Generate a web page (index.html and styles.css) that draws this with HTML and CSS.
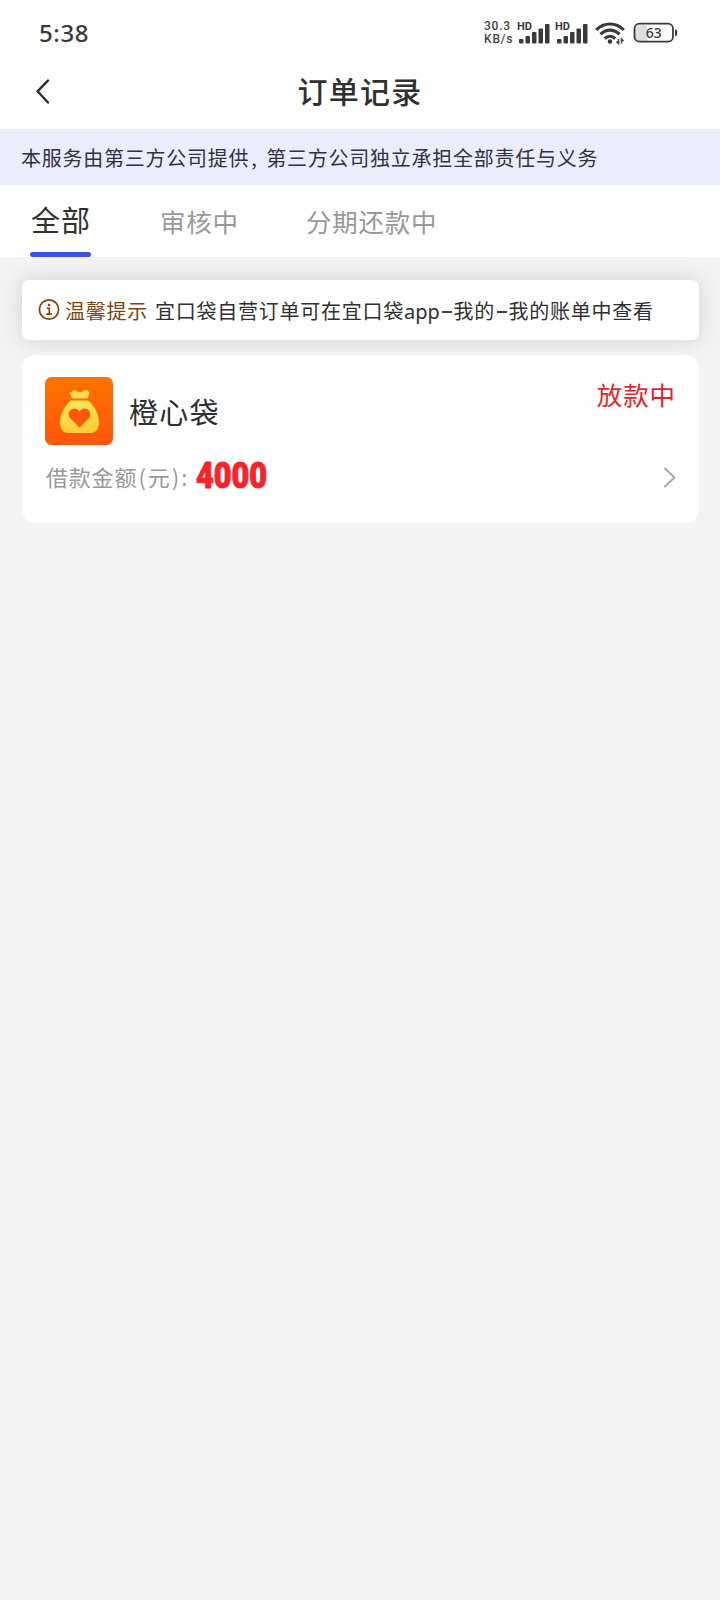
FILE: index.html
```html
<!DOCTYPE html>
<html lang="zh-CN">
<head>
<meta charset="utf-8">
<meta name="viewport" content="width=device-width, initial-scale=1">
<title>订单记录</title>
<link rel="stylesheet" href="styles.css">
</head>
<body>
<div class="status">
  <span class="clock">5:38</span>
  <div class="status-right">
    <div class="speed"><span>30.3</span><span>KB/s</span></div>
    <svg class="signals" width="72" height="28" viewBox="0 -2 72 28">
      <g fill="#3a3a3a">
        <text class="hd" x="0" y="9" textLength="15" lengthAdjust="spacingAndGlyphs">HD</text>
        <rect x="2" y="18" width="4.500" height="4.500" rx="1"/><rect x="8.500" y="15" width="4.500" height="7.500" rx="1"/><rect x="15" y="11" width="4.500" height="11.500" rx="1"/><rect x="21.500" y="7.500" width="4.500" height="15" rx="1"/><rect x="28" y="3" width="4.500" height="19.500" rx="1"/>
        <text class="hd" x="38" y="9" textLength="15" lengthAdjust="spacingAndGlyphs">HD</text>
        <rect x="40" y="18" width="4.500" height="4.500" rx="1"/><rect x="46.500" y="15" width="4.500" height="7.500" rx="1"/><rect x="53" y="11" width="4.500" height="11.500" rx="1"/><rect x="59.500" y="7.500" width="4.500" height="15" rx="1"/><rect x="66" y="3" width="4.500" height="19.500" rx="1"/>
      </g>
    </svg>
    <svg class="wifi" width="30" height="24" viewBox="0 0 30 24">
      <g fill="none" stroke="#3a3a3a" stroke-width="3.200">
        <path d="M1.200 9C9 1 21 1 28.800 9"/><path d="M5.500 13.300C11 7.700 19 7.700 24.500 13.300"/><path d="M9.700 17.600C12.800 14.600 17.200 14.600 20.300 17.600"/>
      </g>
      <circle cx="15" cy="20.500" r="2.300" fill="#3a3a3a"/>
      <path d="M23.500 18v4.500l-2-2M26.500 22.500V18l2 2" fill="none" stroke="#3a3a3a" stroke-width="1.500"/>
    </svg>
    <svg class="battery" width="45" height="22" viewBox="0 0 45 22">
      <path d="M5 3h9v16H5a3 3 0 0 1-3-3V6a3 3 0 0 1 3-3z" fill="#dedede"/>
      <rect x="1.500" y="1.700" width="38.500" height="18" rx="5" fill="none" stroke="#3a3a3a" stroke-width="1.800"/>
      <path d="M42 7.500c2.200 0 2.200 1 2.200 3.200s0 3.200-2.200 3.200z" fill="#3a3a3a"/>
      <text class="charge" x="20.800" y="15.700" text-anchor="middle">63</text>
    </svg>
  </div>
</div>
<header class="nav">
  <svg class="back" width="16" height="26" viewBox="0 0 16 26"><path d="M13 2.500L2.500 13.300L13 24.500" fill="none" stroke="#2b2b2b" stroke-width="2.400" stroke-linecap="round" stroke-linejoin="round"/></svg>
  <h1 class="title">订单记录</h1>
</header>
<div class="notice">本服务由第三方公司提供<span class="comma">,</span>第三方公司独立承担全部责任与义务</div>
<nav class="tabs">
  <div class="tab active">全部</div>
  <div class="tab">审核中</div>
  <div class="tab">分期还款中</div>
</nav>
<main class="content">
  <div class="tip">
    <svg class="info" width="22" height="22" viewBox="0 0 22 22"><g fill="none" stroke="#80430f"><circle cx="11" cy="10.500" r="9.600" stroke-width="1.700"/><path d="M8.700 9.300h2.600v5.500M8.300 15.100h5.800" stroke-width="1.600"/></g><circle cx="11" cy="6" r="1.300" fill="#80430f"/></svg>
    <span class="tip-label">温馨提示</span>
    <span class="tip-text">宜口袋自营订单可在宜口袋<span class="latin">app</span><i class="dash"></i>我的<i class="dash"></i>我的账单中查看</span>
  </div>
  <section class="order">
    <div class="order-head">
      <svg class="logo" width="68" height="68" viewBox="0 0 68 68">
        <defs>
          <linearGradient id="orange" x1="0" y1="0" x2="0" y2="1"><stop offset="0" stop-color="#ff7300"/><stop offset="1" stop-color="#ff560c"/></linearGradient>
          <linearGradient id="gold" x1="0" y1="0" x2="0.300" y2="1"><stop offset="0" stop-color="#ffea5c"/><stop offset="1" stop-color="#ffce34"/></linearGradient>
        </defs>
        <rect width="68" height="68" rx="6.500" fill="url(#orange)"/>
        <path d="M27 21.500L24.200 15.500C26.500 15.700 27.200 13.200 29.500 13.200C32 13.200 33 15.500 35 15.300C37 15.100 38 12.700 41 12.900C44 13.100 45 16 43.800 18.500L42.500 21.500Z" fill="#ffd750"/>
        <path d="M26 23.500H43C49 28 54 37 54 45C54 52 51 56 45.500 56H23.500C18 56 15 52 15 45.500C15 37 20 28 26 23.500Z" fill="url(#gold)"/>
        <path d="M34.500 50.500L25.500 41.500C22.500 38.500 23.300 32.500 28.500 31.700C31.500 31.200 33.500 33 34.500 34.500C35.500 33 37.500 31.200 40.500 31.700C45.700 32.500 46.500 38.500 43.500 41.500Z" fill="#ff570c"/>
      </svg>
      <span class="name">橙心袋</span>
      <span class="state">放款中</span>
    </div>
    <div class="order-row">
      <span class="label">借款金额<span class="paren">(</span>元<span class="paren">)</span>:</span>
      <span class="amount">4000</span>
      <svg class="go" width="14" height="22" viewBox="0 0 14 22"><path d="M3 2.500L12.500 11.500L3 20.500" fill="none" stroke="#a6a6a6" stroke-width="2" stroke-linecap="round" stroke-linejoin="round"/></svg>
    </div>
  </section>
</main>
</body>
</html>
```

FILE: styles.css
```css
* { box-sizing: border-box; }
body {
  margin: 0;
  width: 720px;
  min-height: 1600px;
  background: #f3f3f3;
  color: #303030;
  font-family: "Noto Sans CJK SC", "Noto Sans", sans-serif;
  white-space: nowrap;
}
svg { display: block; flex: none; }
.status {
  display: flex;
  justify-content: space-between;
  align-items: center;
  height: 66px;
  padding: 0 42px 0 39px;
  background: #fff;
}
.clock { font: 500 24px/30px "Noto Sans", sans-serif; letter-spacing: 0.6px; color: #3a3a3a; }
.status-right { display: flex; align-items: center; }
.speed {
  display: flex;
  flex-direction: column;
  width: 33px;
  font: 500 12px/13px Roboto, sans-serif;
  letter-spacing: 0.8px;
  color: #444;
}
.hd { font: 700 10px Roboto, sans-serif; }
.wifi { margin-left: 6px; }
.battery { margin-left: 8px; }
.charge { font: 500 14px "Noto Sans", sans-serif; fill: #3a3a3a; }
.nav {
  display: grid;
  grid-template-columns: 1fr auto 1fr;
  align-items: center;
  height: 63px;
  padding: 0 35px 14px;
  background: #fff;
}
.title { margin: 0; padding-bottom: 2px; font-size: 30px; font-weight: 500; line-height: 44px; letter-spacing: 1.3px; }
.notice {
  height: 56px;
  padding-left: 21px;
  background: #ebedfc;
  color: #303240;
  font-size: 20px;
  line-height: 58px;
  letter-spacing: 0.75px;
}
.comma { display: inline-block; width: 17px; padding-left: 2px; }
.tabs {
  display: flex;
  height: 72px;
  padding-left: 30px;
  background: #fff;
}
.tab {
  margin-right: 67px;
  padding: 3px 0 0 2px;
  color: #999;
  font-size: 25.5px;
  line-height: 66px;
  letter-spacing: 0.8px;
}
.tab.active {
  display: flex;
  flex-direction: column;
  width: 61px;
  padding: 2px 0 0;
  color: #303030;
  font-size: 29px;
  line-height: 65px;
  letter-spacing: 1px;
  text-indent: 1px;
}
.tab + .tab + .tab { margin-left: -2px; }
.tab.active::after { content: ""; flex: none; height: 5px; border-radius: 3px; background: #3952e8; }
.content { display: flex; flex-direction: column; gap: 15px; padding: 23px 21px 0 22px; }
.tip {
  display: flex;
  align-items: center;
  height: 60px;
  padding-left: 16px;
  border-radius: 7px;
  background: #fff;
  box-shadow: 0 0 22px rgba(0, 0, 0, 0.14);
  font-size: 20px;
  line-height: 60px;
  letter-spacing: 0.75px;
}
.tip-label { margin-left: 5px; padding-top: 1px; color: #80430f; }
.tip-text { margin-left: 7px; padding-top: 2px; }
.latin { display: inline-block; width: 36px; font-family: "Noto Sans", sans-serif; line-height: 1; letter-spacing: 0; }
.dash { display: inline-block; width: 10px; height: 2px; margin: 0 1.500px 6px 2px; background: #444; }
.order {
  height: 168px;
  padding: 22px 23px 0 23px;
  border-radius: 13px;
  background: #fff;
}
.order-head { display: flex; align-items: center; height: 68px; }
.name { margin-left: 16px; font-size: 29px; line-height: 68px; letter-spacing: 1.2px; }
.state {
  align-self: flex-start;
  margin-left: auto;
  color: #e91f29;
  font-size: 25.5px;
  line-height: 34px;
  letter-spacing: 0.9px;
}
.order-row { display: flex; align-items: center; height: 60px; padding-top: 3px; }
.label { width: 151px; padding: 0 0 2px 1px; color: #999; font-size: 22px; line-height: 58px; letter-spacing: 0.8px; }
.paren { padding: 0 1.200px; }
.amount {
  color: #f8222b;
  font: 900 36.500px/52px Roboto, sans-serif;
  -webkit-text-stroke: 1px #f8222b;
  transform: scaleX(0.84);
  transform-origin: 0 50%;
  padding-bottom: 2px;
}
.go { margin-left: auto; }
```
